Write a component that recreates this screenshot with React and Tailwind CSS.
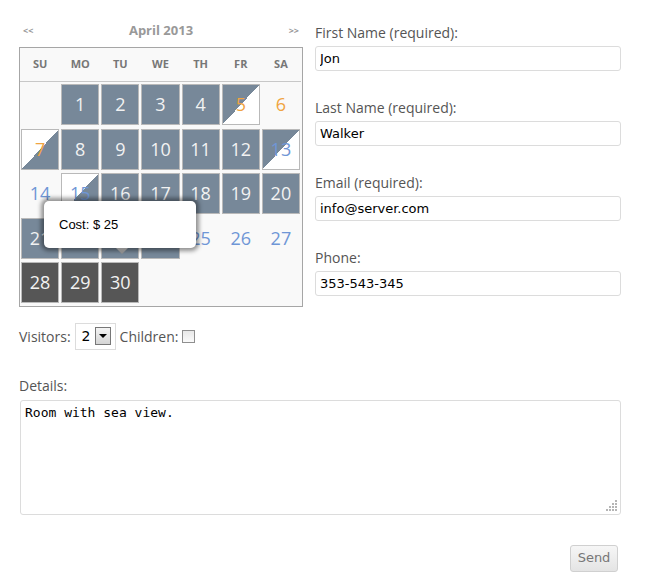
import { useState } from 'react';

const GRAY = 'bg-[#778899] text-[#f2f2f2] border border-[#b9b9b9]';
const DARK = 'bg-[#565656] text-[#f2f2f2] border border-[#b9b9b9]';
const HALF_TL = 'bg-[linear-gradient(to_bottom_right,#778899_50%,#ffffff_50%)] border border-[#b9b9b9]';
const HALF_BR = 'bg-[linear-gradient(to_bottom_right,#ffffff_50%,#778899_50%)] border border-[#b9b9b9]';
const ORANGE = 'text-[#f0a442]';
const BLUE = 'text-[#6f96d6]';

// [label, style, textColor]
const rows = [
  [null, ['1', GRAY], ['2', GRAY], ['3', GRAY], ['4', GRAY], ['5', HALF_TL, ORANGE], ['6', '', ORANGE]],
  [['7', HALF_BR, ORANGE], ['8', GRAY], ['9', GRAY], ['10', GRAY], ['11', GRAY], ['12', GRAY], ['13', HALF_TL, BLUE]],
  [['14', '', BLUE], ['15', HALF_BR, BLUE], ['16', GRAY], ['17', GRAY], ['18', GRAY], ['19', GRAY], ['20', GRAY]],
  [['21', GRAY], ['22', GRAY], ['23', GRAY], ['24', GRAY], ['25', '', BLUE], ['26', '', BLUE], ['27', '', BLUE]],
  [['28', DARK], ['29', DARK], ['30', DARK], null, null, null, null],
];

const days = ['SU', 'MO', 'TU', 'WE', 'TH', 'FR', 'SA'];

function Calendar() {
  return (
    <div className="w-[284px]">
      <div className="h-[25px] flex items-center justify-between px-[4px] mb-[4px] text-[#999]">
        <span className="text-[9px] font-bold">&lt;&lt;</span>
        <span className="text-[13px] font-bold">April 2013</span>
        <span className="text-[9px] font-bold">&gt;&gt;</span>
      </div>
      <div className="relative border border-[#a6a6a6] bg-[#f9f9f9] pr-[1px]">
        <div className="grid grid-cols-7 h-[34px] items-center border-b border-[#c8c8c8]">
          {days.map(d => (
            <div key={d} className="text-center text-[11px] font-bold text-[#777]">{d}</div>
          ))}
        </div>
        <div className="grid grid-cols-7 auto-rows-[44.5px] pt-[1px]">
          {rows.flat().map((c, i) => (
            <div key={i} className="px-[1px] pt-[1px]">
              {c && (
                <div className={`h-[41px] flex items-center justify-center text-[18px] ${c[1]} ${c[2] || ''}`}>
                  {c[0]}
                </div>
              )}
            </div>
          ))}
        </div>

        <div className="absolute left-[24px] top-[153px] w-[152px] h-[47px] bg-white rounded-[5px] shadow-[0_0_4px_3px_rgba(0,0,0,0.42)] flex items-center pl-[15px] text-[13px] text-black font-['Liberation_Sans',Arial,sans-serif]">
          Cost: $ 25
          <div className="absolute left-[72px] -bottom-[6px] w-0 h-0 border-l-[6px] border-r-[6px] border-t-[6px] border-l-transparent border-r-transparent border-t-[#8c8c8c]" />
        </div>
      </div>
    </div>
  );
}

function Field({ label, value, first }) {
  return (
    <div className={first ? '' : 'mt-[27px]'}>
      <div className="h-[20px] leading-[20px] text-[14px] text-[#555]">{label}</div>
      <input
        readOnly
        value={value}
        className="mt-[3px] block w-[306px] h-[25px] border border-[#dcdcdc] rounded-[3px] px-[4px] text-[13px] text-black font-['DejaVu_Sans',Verdana,sans-serif] outline-none"
      />
    </div>
  );
}

export default function App() {
  const [details] = useState('Room with sea view.');

  return (
    <div className="w-[652px] h-[587px] bg-white pt-[18px] font-['Open_Sans',sans-serif]">
      <div className="flex">
        <div className="ml-[19px]">
          <Calendar />
        </div>
        <div className="ml-[12px] pt-[5px]">
          <Field first label="First Name (required):" value="Jon" />
          <Field label="Last Name (required):" value="Walker" />
          <Field label="Email (required):" value="info@server.com" />
          <Field label="Phone:" value="353-543-345" />
        </div>
      </div>

      <div className="ml-[19px] mt-[16px] h-[27px] flex items-center text-[14px] text-[#555]">
        <span>Visitors:</span>
        <div className="ml-[4px] w-[41px] h-[27px] border border-[#dcdcdc] flex items-center pl-[6px]">
          <span className="text-[14px] text-black font-['DejaVu_Sans',sans-serif]">2</span>
          <div className="ml-[4px] w-[16px] h-[18px] border border-[#777] bg-[linear-gradient(#f4f4f4,#d4d4d4)] flex items-center justify-center">
            <div className="w-0 h-0 border-l-[4px] border-r-[4px] border-t-[4px] border-l-transparent border-r-transparent border-t-black" />
          </div>
        </div>
        <span className="ml-[4px]">Children:</span>
        <div className="ml-[4px] w-[13px] h-[13px] border border-[#8f8f8f] bg-[linear-gradient(#e8e8e8,#fafafa)]" />
      </div>

      <div className="ml-[19px] mt-[26px] h-[20px] leading-[20px] text-[14px] text-[#555]">Details:</div>
      <div className="relative ml-[20px] mt-[4px] w-[601px] h-[115px]">
        <textarea
          readOnly
          value={details}
          className="w-full h-full resize-none border border-[#dcdcdc] rounded-[3px] px-[4px] py-[2px] text-[13px] text-black font-['DejaVu_Sans_Mono',monospace] outline-none"
        />
        <svg className="absolute right-[4px] bottom-[4px]" width="11" height="11" viewBox="0 0 11 11">
          {[[9, 1], [6, 4], [9, 4], [3, 7], [6, 7], [9, 7], [0, 10], [3, 10], [6, 10], [9, 10]].map(([x, y], i) => (
            <rect key={i} x={x} y={y - 1} width="2" height="2" fill="#b5b5b5" />
          ))}
        </svg>
      </div>

      <div className="flex justify-end mr-[34px] mt-[30px]">
        <button className="w-[48px] h-[27px] border border-[#d0d0d0] rounded-[3px] bg-[linear-gradient(#f6f6f6,#e4e4e4)] text-[13px] text-[#777] font-['DejaVu_Sans',sans-serif]">
          Send
        </button>
      </div>
    </div>
  );
}
